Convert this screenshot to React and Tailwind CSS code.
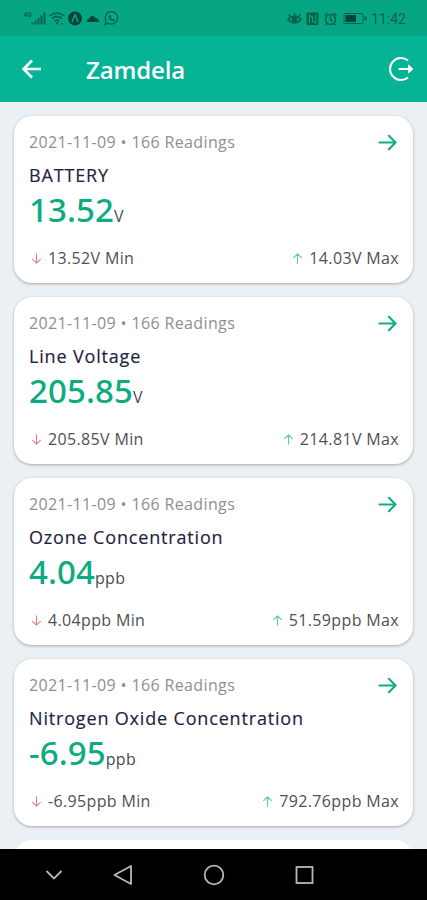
import React from 'react';

const readings = [
    { name: 'BATTERY', value: '13.52', unit: 'V', min: '13.52V', max: '14.03V' },
    { name: 'Line Voltage', value: '205.85', unit: 'V', min: '205.85V', max: '214.81V' },
    { name: 'Ozone Concentration', value: '4.04', unit: 'ppb', min: '4.04ppb', max: '51.59ppb' },
    { name: 'Nitrogen Oxide Concentration', value: '-6.95', unit: 'ppb', min: '-6.95ppb', max: '792.76ppb' },
];

const Arrow = ({ className, strokeWidth = 2 }) => (
    <svg className={className} viewBox="0 0 20 20" fill="none" stroke="currentColor" strokeWidth={strokeWidth} strokeLinecap="round" strokeLinejoin="round">
        <path d="M1.5 10h17M11.5 3l7 7-7 7" />
    </svg>
);

const StatusBar = () => (
    <div className="h-9 shrink-0 bg-[#06a684] text-[#04634c] flex items-center justify-between pl-[23px] pr-[21px]">
        <svg className="w-[96px] h-[18px]" viewBox="0 0 96 18" fill="none" stroke="currentColor">
            <text x="0.5" y="8" fontSize="6.5" fontWeight="700" fontFamily="Roboto, sans-serif" fill="currentColor" stroke="none">4G</text>
            <path d="M9.5 15.5v-2M12.5 15.5v-4M15.5 15.5v-6.5M18.5 15.5v-9M21.5 15.5v-12" strokeWidth="2" />
            <path d="M26.5 7q7.5-6 15 0M29 9.7q5-4.5 10 0M31.5 12.2q2.5-2.2 5 0" strokeWidth="1.6" />
            <path d="M33 13.5l1.2 1.8 1.2-1.8zM37.5 15.5l1.5-1.5 1.5 1.5" strokeWidth="1" />
            <g className="text-[#04453a]">
                <circle cx="52" cy="9.5" r="7" fill="currentColor" stroke="none" />
                <path d="M49 13l3-7.5 3 7.5" stroke="#06a684" strokeWidth="1.5" strokeLinejoin="round" />
                <path d="M64 13c-.6-1.8.6-3 2-3.4 1-3 4.500-3.800 6-.8 2.400.2 4 2 4.200 4.200z" fill="currentColor" stroke="none" />
            </g>
            <path d="M82 15.5l1-3.7a6.2 6.2 0 1 1 2.5 2.5z" strokeWidth="1.3" />
            <path d="M85.8 6.5c-.6 3 2 5.8 5.2 5.8l1-1.5-1.8-1-1 .8-1.8-2 .7-1-.8-1.5z" fill="currentColor" stroke="none" />
        </svg>
        <div className="flex items-center">
            <svg className="w-[86px] h-[18px]" viewBox="0 0 86 18" fill="none" stroke="currentColor" strokeWidth="1.5">
                <path d="M3 10.5q6.5-7 13 0-6.5 7-13 0zM3.5 5.5l2 2M9.5 3.5v2.5M15.5 5.5l-2 2" />
                <circle cx="9.5" cy="10.5" r="2.2" fill="currentColor" />
                <rect x="21.5" y="3.5" width="12" height="12.5" rx="1" fill="currentColor" stroke="none" />
                <path d="M24.5 14V6.5l3 1.5v4.500l3.300 1.500V5.500" stroke="#06a684" strokeWidth="1.1" />
                <circle cx="45.5" cy="10.5" r="5" />
                <path d="M45.5 7.5v3.2l2.2 1.3M39.5 6.5l3-2.500M51.500 6.500l-3-2.500M42 14.500l-1.500 1.500M49 14.500l1.500 1.500" />
                <rect x="59" y="4.5" width="19" height="10" rx="1" strokeWidth="1" />
                <rect x="60.5" y="6" width="10.5" height="7" fill="#04453a" stroke="none" />
                <path d="M80.5 7.5v4" strokeWidth="2" />
            </svg>
            <span className="font-['Roboto',sans-serif] text-[14px] leading-5 pt-px">11:42</span>
        </div>
    </div>
);

const Header = () => (
    <header className="h-[66px] shrink-0 bg-[#04b495] text-white flex items-center pl-[22px] pr-[13px]">
        <svg className="w-5 h-5" viewBox="0 0 20 20" fill="none" stroke="currentColor" strokeWidth="2.6">
            <path d="M19 10H2M10 1.5L1.5 10l8.5 8.5" />
        </svg>
        <h1 className="ml-[44px] text-[24px] leading-8 pt-px font-semibold tracking-[-0.15px]">Zamdela</h1>
        <svg className="ml-auto w-[26px] h-[26px]" viewBox="0 0 26 26" fill="none" stroke="currentColor" strokeWidth="2">
            <path d="M20 4.5a11 11 0 1 0 0 17M10.5 13H22" />
            <path d="M20.5 9l4.5 4-4.5 4z" fill="currentColor" strokeWidth="1" />
        </svg>
    </header>
);

const ReadingCard = ({ reading }) => (
    <div className="h-[167px] shrink-0 bg-white rounded-[18px] shadow-[0_1px_3px_rgba(0,0,0,0.3)] px-[15px] pt-[14px]">
        <div className="flex items-center justify-between h-6">
            <span className="text-[16px] leading-6 tracking-[0.36px] text-[#8b9094]">2021-11-09 • 166 Readings</span>
            <Arrow className="w-[19px] h-[19px] mt-px mr-px text-[#12ad84]" strokeWidth={2.2} />
        </div>
        <h2 className="mt-2 text-[18px] leading-[26px] tracking-[0.83px] [-webkit-text-stroke:0.15px] text-[#22223f]">{reading.name}</h2>
        <div className="mt-[2px] h-10 leading-10 whitespace-nowrap">
            <span className="font-['Noto_Sans','Open_Sans',sans-serif] text-[33px] font-medium tracking-[0.1px] text-[#0cab80]">{reading.value}</span>
            <span className="text-[16px] tracking-[0.3px] text-[#4b4b4f]">{reading.unit}</span>
        </div>
        <div className="mt-4 flex items-center justify-between text-[16px] leading-6 tracking-[0.35px] text-[#4f5054]">
            <span className="flex items-center">
                <Arrow className="w-[11px] h-[11px] ml-[2px] mr-[6px] rotate-90 text-[#f0787c]" />
                {reading.min} Min
            </span>
            <span className="flex items-center -mr-px">
                <Arrow className="w-[11px] h-[11px] mr-[6px] -rotate-90 text-[#58cf9c]" />
                {reading.max} Max
            </span>
        </div>
    </div>
);

const NavBar = () => (
    <div className="h-[51px] shrink-0 bg-black text-[#b8b8b8]">
        <svg className="w-full h-full" viewBox="0 0 427 51" fill="none" stroke="currentColor" strokeWidth="1.8">
            <path d="M46.5 22l7.5 7.5 7.5-7.5" />
            <path d="M131 17v18l-16.5-9z" strokeLinejoin="round" />
            <circle cx="214" cy="26" r="9.3" />
            <rect x="296.5" y="18" width="16" height="16" />
        </svg>
    </div>
);

const App = () => {
    return (
        <div className="w-full h-[900px] flex flex-col overflow-hidden bg-[#ebf0f4] font-['Open_Sans','Noto_Sans',sans-serif]">
            <StatusBar />
            <Header />
            <main className="flex-1 min-h-0 overflow-hidden flex flex-col gap-[14px] pt-[14px] px-[14px]">
                {readings.map((reading) => (
                    <ReadingCard key={reading.name} reading={reading} />
                ))}
                <div className="h-[167px] shrink-0 bg-white rounded-[18px]" />
            </main>
            <NavBar />
        </div>
    );
};

export default App;
